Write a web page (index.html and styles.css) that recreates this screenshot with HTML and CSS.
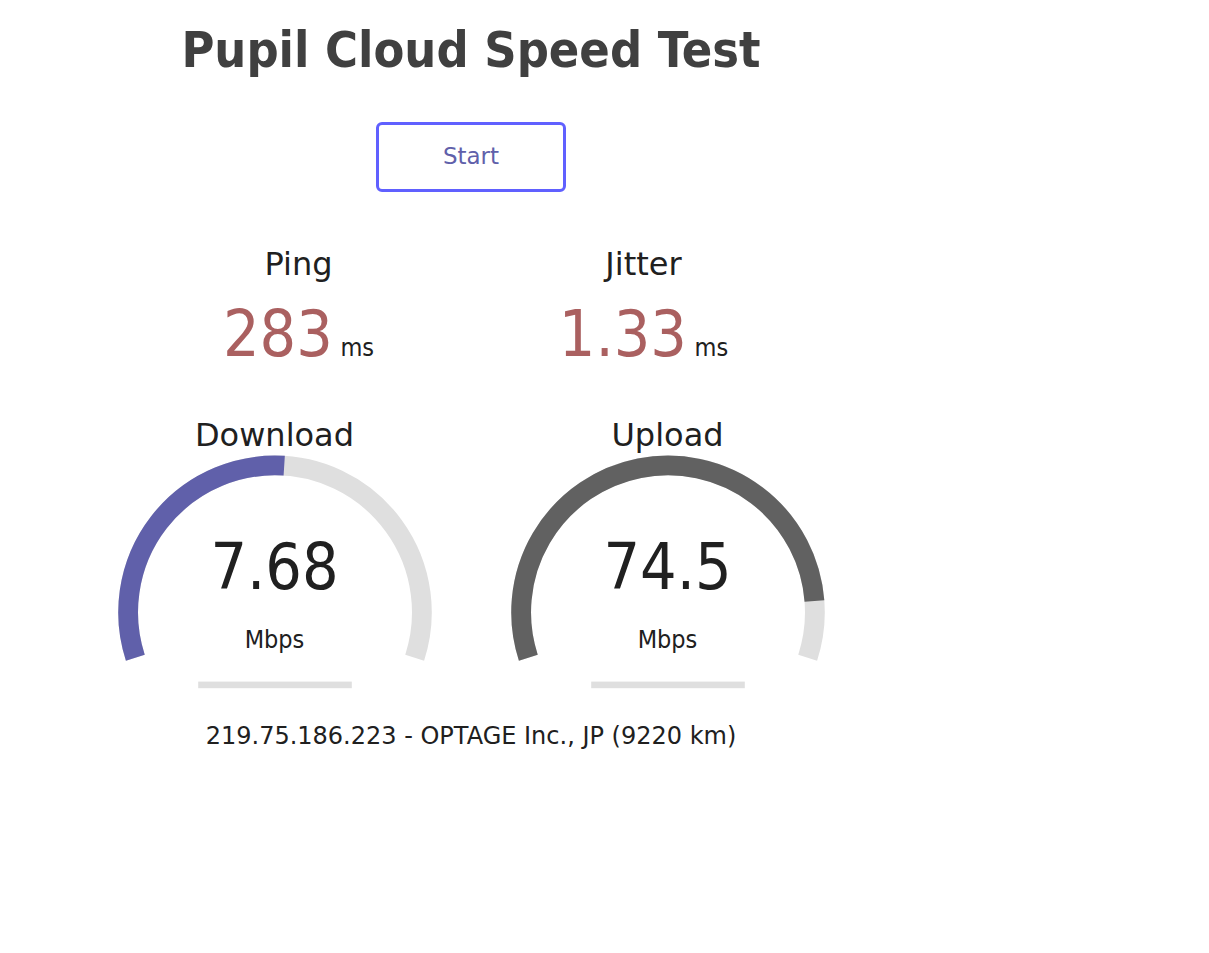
FILE: index.html
```html
<!DOCTYPE html>
<html lang="en">
<head>
  <meta charset="UTF-8">
  <meta name="viewport" content="width=device-width, initial-scale=1.0">
  <title>Pupil Cloud Speed Test</title>
  <link rel="stylesheet" href="styles.css">
</head>
<body>
  <div class="page">
    <h1>Pupil Cloud Speed Test</h1>
    <div class="start-btn">Start</div>

    <!-- Ping / Jitter -->
    <div class="test-group small-row">
      <div class="test-area2">
        <div class="test-name">Ping</div>
        <div class="value-line"><span class="meter-text ping">283</span> <span class="unit">ms</span></div>
      </div>
      <div class="test-area2">
        <div class="test-name">Jitter</div>
        <div class="value-line"><span class="meter-text ping">1.33</span> <span class="unit">ms</span></div>
      </div>
    </div>

    <!-- Download / Upload gauges -->
    <div class="test-group gauge-row">
      <div class="test-area">
        <svg class="meter" viewBox="0 0 384 300" width="384" height="300">
          <path class="meter-bk" d="M52.32 249.69 A146.87 146.87 0 1 1 331.68 249.69"/>
          <path class="meter-dl" d="M52.32 249.69 A146.87 146.87 0 0 1 201.22 57.72"/>
          <rect class="meter-prog" x="115.2" y="273.6" width="153.6" height="6.6"/>
        </svg>
        <div class="gauge-text">
          <div class="test-name">Download</div>
          <div class="meter-text">7.68</div>
          <div class="unit">Mbps</div>
        </div>
      </div>
      <div class="test-area">
        <svg class="meter" viewBox="0 0 384 300" width="384" height="300">
          <path class="meter-bk" d="M52.32 249.69 A146.87 146.87 0 1 1 331.68 249.69"/>
          <path class="meter-ul" d="M52.32 249.69 A146.87 146.87 0 1 1 338.44 193.03"/>
          <rect class="meter-prog" x="115.2" y="273.6" width="153.6" height="6.6"/>
        </svg>
        <div class="gauge-text">
          <div class="test-name">Upload</div>
          <div class="meter-text">74.5</div>
          <div class="unit">Mbps</div>
        </div>
      </div>
    </div>

    <div class="ip-area">219.75.186.223 - OPTAGE Inc., JP (9220 km)</div>
  </div>
</body>
</html>
```

FILE: styles.css
```css
* {
  box-sizing: border-box;
  margin: 0;
  padding: 0;
}
html, body {
  background: #fff;
  color: #202020;
}
body {
  font-family: "DejaVu Sans", Verdana, sans-serif;
  font-size: 24px;
}
.page {
  width: 942px;
  text-align: center;
}
h1 {
  color: #404040;
  font-family: "DejaVu Sans Condensed", "DejaVu Sans", sans-serif;
  font-weight: bold;
  font-size: 50px;
  line-height: 60px;
  padding-top: 20px;
}
.start-btn {
  width: 190px;
  height: 70px;
  margin: 42px auto 0;
  border: 3px solid #6060ff;
  border-radius: 6px;
  color: #6060aa;
  font-size: 23px;
  line-height: 63px;
}
.test-group {
  display: flex;
  justify-content: center;
  gap: 9px;
}
.small-row {
  margin-top: 52px;
}
.test-area2 {
  width: 336px;
}
.test-name {
  font-size: 32px;
  line-height: 40px;
}
.meter-text {
  font-family: "DejaVu Sans Condensed", "DejaVu Sans", sans-serif;
  font-size: 64px;
  line-height: 64px;
}
.unit {
  font-family: "DejaVu Sans Condensed", "DejaVu Sans", sans-serif;
  font-size: 25px;
  line-height: 1;
}
.value-line {
  margin-top: 18px;
  line-height: 64px;
  height: 64px;
}
.meter-text.ping {
  color: #aa6060;
}
/* gauges */
.gauge-row {
  margin-top: 42px;
}
.test-area {
  width: 384px;
  height: 300px;
  display: grid;
}
.test-area > * {
  grid-area: 1 / 1;
}
.meter {
  display: block;
}
.meter-bk, .meter-dl, .meter-ul {
  fill: none;
  stroke-width: 19.8;
}
.meter-bk {
  stroke: #dfdfdf;
}
.meter-dl {
  stroke: #6060aa;
}
.meter-ul {
  stroke: #616161;
}
.meter-prog {
  fill: #dfdfdf;
}
.gauge-text {
  display: flex;
  flex-direction: column;
  align-items: center;
  padding-top: 7px;
}
.gauge-text .meter-text {
  margin-top: 80px;
}
.gauge-text .unit {
  margin-top: 29px;
  line-height: 24px;
}
.ip-area {
  margin-top: 13px;
  line-height: 30px;
}
```
